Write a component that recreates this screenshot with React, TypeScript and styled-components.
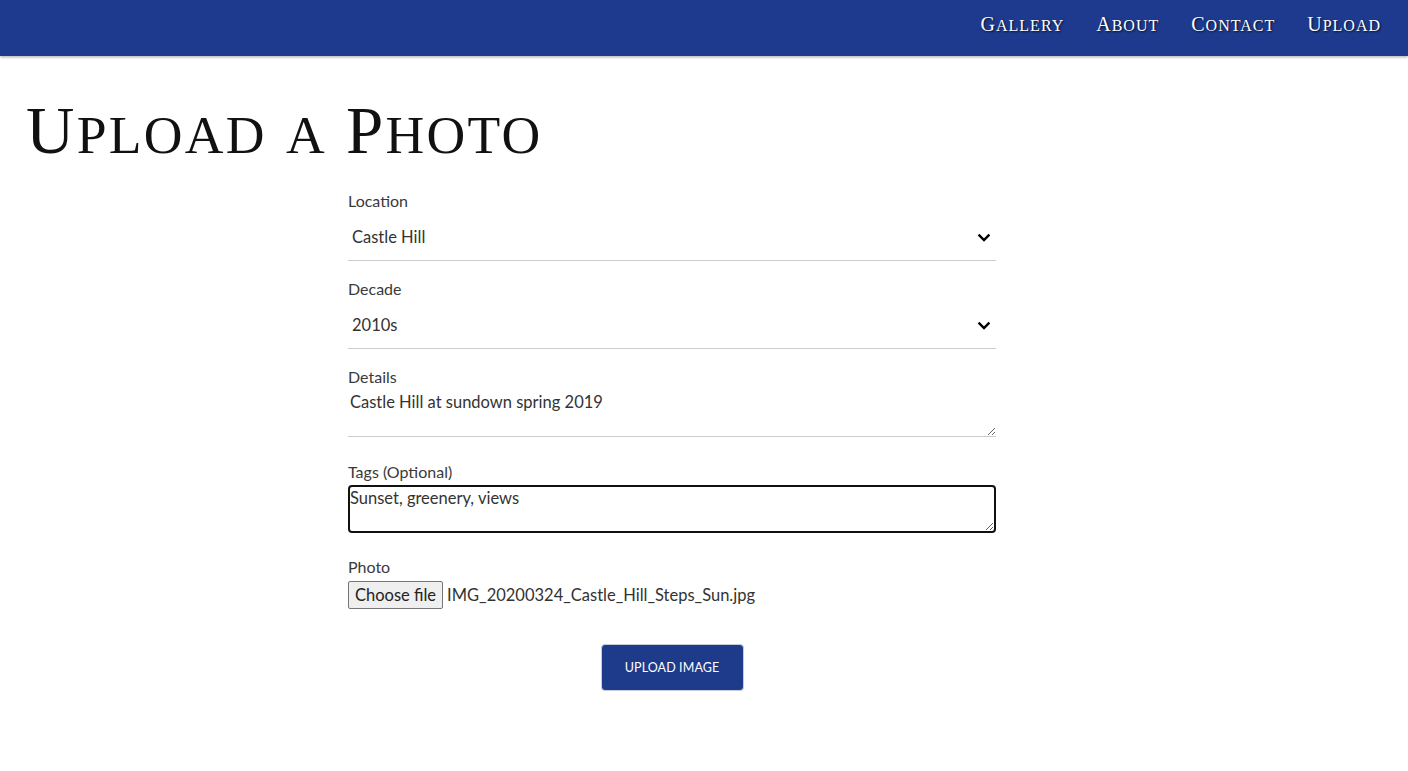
import React from "react";
import styled, { createGlobalStyle } from "styled-components";

const GlobalStyle = createGlobalStyle`
  html, body { margin: 0; padding: 0; background: #ffffff; }
  body { font-family: "Lato", "Noto Sans", sans-serif; color: #333333; }
  * { box-sizing: border-box; }
`;

const Header = styled.header`
  height: 56px;
  background: #1e3a8e;
  box-shadow: 0 1px 3px rgba(0, 0, 0, 0.35);
  display: flex;
  justify-content: flex-end;
  align-items: center;
  padding: 0 27px 8px 0;
`;

const Nav = styled.nav`
  display: flex;
  gap: 32px;
`;

const NavLink = styled.a`
  font-family: "Liberation Serif", serif;
  font-size: 20px;
  letter-spacing: 1px;
  color: #ffffff;
  text-decoration: none;
  text-shadow: 1px 1px 2px rgba(0, 0, 0, 0.8);
  cursor: pointer;
`;

const Small = styled.span`
  font-size: 0.8em;
  text-transform: uppercase;
`;

const SmallCaps: React.FC<{ text: string }> = ({ text }) => {
  const parts = text.match(/[A-Z ]+|[^A-Z ]+/g) || [];
  return (
    <>
      {parts.map((p, i) =>
        /[A-Z ]/.test(p[0]) ? <React.Fragment key={i}>{p}</React.Fragment> : <Small key={i}>{p}</Small>
      )}
    </>
  );
};

const Main = styled.main`
  padding: 0 88px 60px 24px;
`;

const Title = styled.h1`
  font-family: "Liberation Serif", serif;
  font-weight: 400;
  font-size: 67px;
  line-height: 68px;
  letter-spacing: 2.3px;
  color: #111111;
  margin: 40px 0 0 2px;
`;

const Form = styled.form`
  width: 50%;
  margin: 20px auto 0;
  display: flex;
  flex-direction: column;
`;

const FieldGroup = styled.div`
  margin-bottom: 16px;
`;

const Label = styled.label`
  display: block;
  font-size: 16px;
  line-height: 24px;
  color: #3a3a3a;
`;

const SelectWrap = styled.div`
  position: relative;
`;

const Select = styled.select`
  appearance: none;
  -webkit-appearance: none;
  display: block;
  width: 100%;
  height: 48px;
  border: none;
  border-bottom: 1px solid #cccccc;
  background: transparent;
  font-family: inherit;
  font-size: 16.5px;
  color: #333333;
  padding: 0 30px 0 4px;
  outline: none;
`;

const Chevron = styled.svg`
  position: absolute;
  right: 6px;
  top: 20px;
  pointer-events: none;
`;

const TextArea = styled.textarea<{ $focused?: boolean }>`
  display: block;
  width: 100%;
  height: 48px;
  margin: ${(p) => (p.$focused ? "1px 0 6px" : "0 0 7px")};
  border: ${(p) => (p.$focused ? "2px solid #111111" : "none")};
  border-bottom: ${(p) => (p.$focused ? "2px solid #111111" : "1px solid #cccccc")};
  border-radius: ${(p) => (p.$focused ? "4px" : "0")};
  font-family: inherit;
  font-size: 16.5px;
  line-height: 22px;
  color: #333333;
  padding: ${(p) => (p.$focused ? "0" : "2px")};
  resize: both;
  outline: none;
`;

const FileRow = styled.div`
  display: flex;
  align-items: center;
  gap: 4px;
  margin-top: 2px;
`;

const FileButton = styled.label`
  height: 28px;
  padding: 0 6px;
  display: inline-flex;
  align-items: center;
  background: #efefef;
  border: 1px solid #767676;
  border-radius: 2px;
  font-size: 16.5px;
  color: #222222;
  cursor: pointer;
`;

const HiddenFile = styled.input`
  display: none;
`;

const FileName = styled.span`
  font-size: 16.5px;
  color: #333333;
`;

const SubmitButton = styled.button`
  align-self: center;
  margin-top: 19px;
  width: 143px;
  height: 47px;
  background: #1e3a8a;
  border: 1px solid #c8ccd6;
  border-radius: 4px;
  color: #ffffff;
  font-family: inherit;
  font-size: 12.5px;
  letter-spacing: 0.1px;
  text-transform: uppercase;
  cursor: pointer;
`;

const ChevronIcon = () => (
  <Chevron width="12" height="10" viewBox="0 0 12 10" aria-hidden="true">
    <path d="M1.5 2.5 L6 7 L10.5 2.5" fill="none" stroke="#000" strokeWidth="2.4" strokeLinecap="square" />
  </Chevron>
);

export default function App() {
  return (
    <>
      <GlobalStyle />
      <Header>
        <Nav>
          <NavLink><SmallCaps text="Gallery" /></NavLink>
          <NavLink><SmallCaps text="About" /></NavLink>
          <NavLink><SmallCaps text="Contact" /></NavLink>
          <NavLink><SmallCaps text="Upload" /></NavLink>
        </Nav>
      </Header>
      <Main>
        <Title><SmallCaps text="Upload a Photo" /></Title>
        <Form onSubmit={(e) => e.preventDefault()}>
          <FieldGroup>
            <Label htmlFor="location">Location</Label>
            <SelectWrap>
              <Select id="location" defaultValue="Castle Hill">
                <option>Castle Hill</option>
                <option>Harbour</option>
                <option>Old Town</option>
              </Select>
              <ChevronIcon />
            </SelectWrap>
          </FieldGroup>
          <FieldGroup>
            <Label htmlFor="decade">Decade</Label>
            <SelectWrap>
              <Select id="decade" defaultValue="2010s">
                <option>1990s</option>
                <option>2000s</option>
                <option>2010s</option>
                <option>2020s</option>
              </Select>
              <ChevronIcon />
            </SelectWrap>
          </FieldGroup>
          <FieldGroup>
            <Label htmlFor="details">Details</Label>
            <TextArea id="details" defaultValue="Castle Hill at sundown spring 2019" />
          </FieldGroup>
          <FieldGroup>
            <Label htmlFor="tags">Tags (Optional)</Label>
            <TextArea id="tags" $focused defaultValue="Sunset, greenery, views" />
          </FieldGroup>
          <FieldGroup>
            <Label>Photo</Label>
            <FileRow>
              <FileButton>
                Choose file
                <HiddenFile type="file" />
              </FileButton>
              <FileName>IMG_20200324_Castle_Hill_Steps_Sun.jpg</FileName>
            </FileRow>
          </FieldGroup>
          <SubmitButton type="submit">Upload Image</SubmitButton>
        </Form>
      </Main>
    </>
  );
}
